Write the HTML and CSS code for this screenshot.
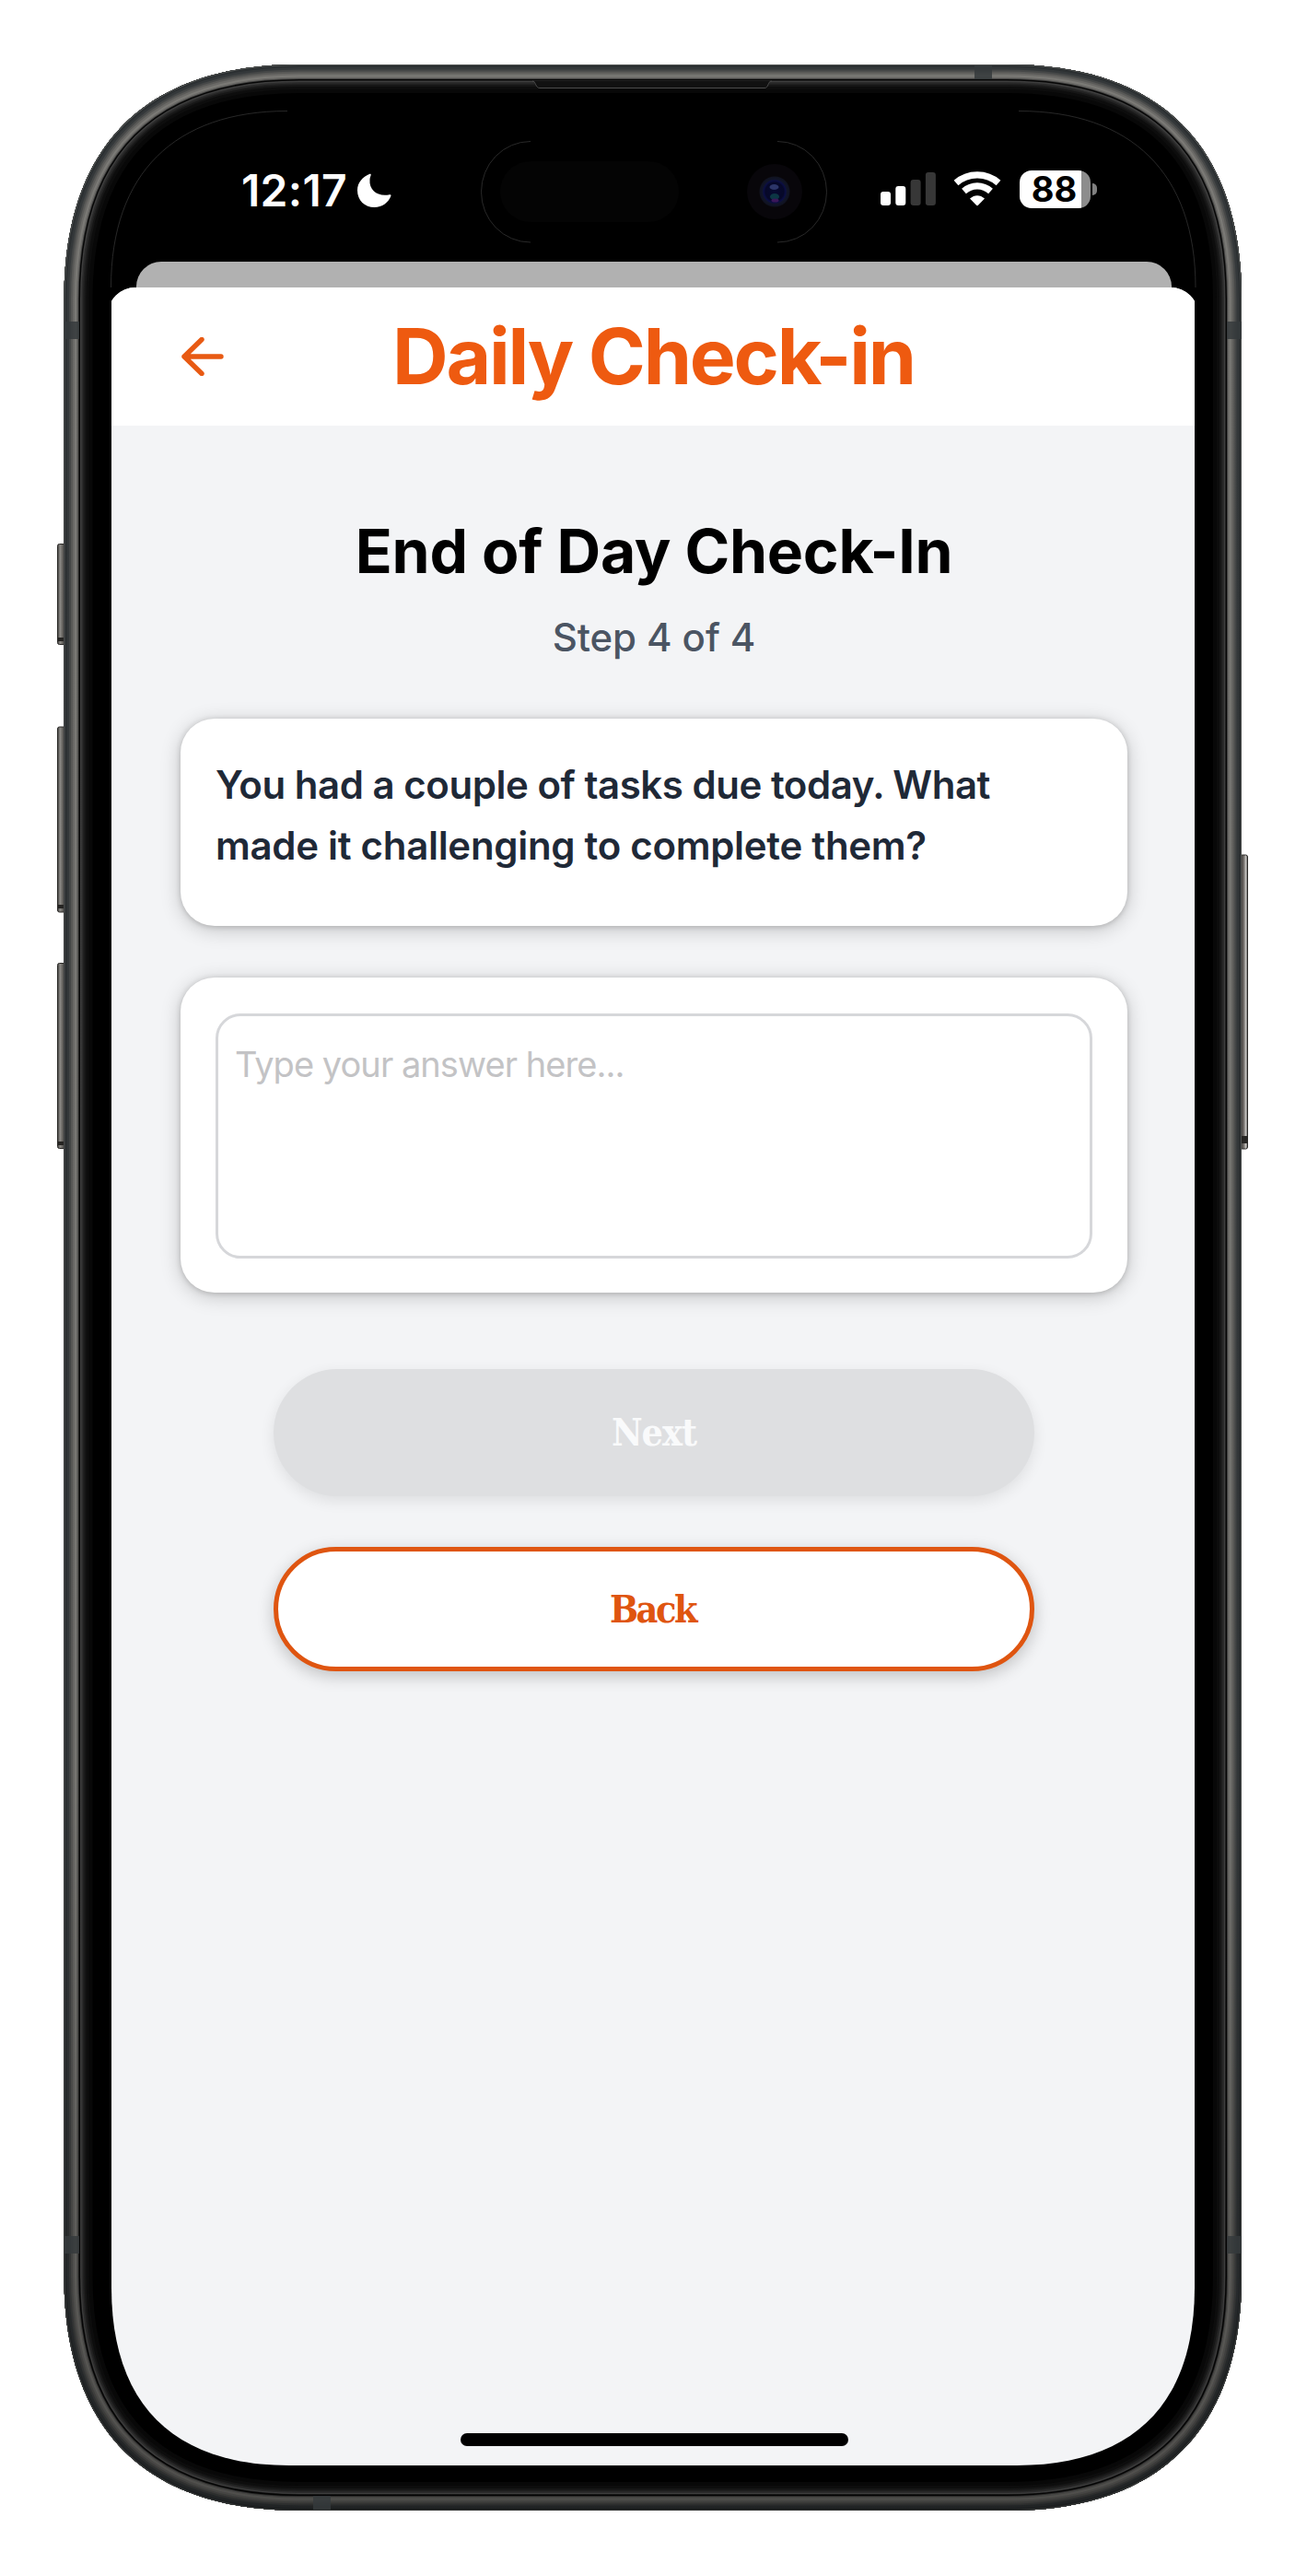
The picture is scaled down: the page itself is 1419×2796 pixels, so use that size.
FILE: index.html
```html
<!DOCTYPE html>
<html lang="en">
<head>
<meta charset="utf-8">
<title>Daily Check-in</title>
<link rel="stylesheet" href="styles.css">
</head>
<body>
<div class="phone">
  <svg class="bezel" viewBox="0 0 1419 2796" aria-hidden="true">
    <defs>
      <path id="body" d="M69.5 325C69.5 158 158 70 325 70H1093C1260 70 1348 158 1348 325V2470C1348 2637 1260 2725 1093 2725H325C158 2725 69.5 2637 69.5 2470Z"/>
      <clipPath id="bodyClip"><use href="#body"/></clipPath>
      <linearGradient id="shade" x1="0" y1="0" x2="0" y2="1">
        <stop offset="0" stop-color="#000" stop-opacity="0"/>
        <stop offset=".7" stop-color="#000" stop-opacity=".04"/>
        <stop offset="1" stop-color="#000" stop-opacity=".36"/>
      </linearGradient>
      <linearGradient id="btnL" x1="0" x2="1" y1="0" y2="0">
        <stop offset="0" stop-color="#3a3937"/><stop offset=".3" stop-color="#8d8b87"/>
        <stop offset=".55" stop-color="#6b6965"/><stop offset="1" stop-color="#2c2b29"/>
      </linearGradient>
      <linearGradient id="btnR" x1="1" x2="0" y1="0" y2="0">
        <stop offset="0" stop-color="#555"/><stop offset=".25" stop-color="#c0bebb"/>
        <stop offset=".5" stop-color="#75716d"/><stop offset="1" stop-color="#2f2c2a"/>
      </linearGradient>
      <radialGradient id="lens" cx=".5" cy=".5" r=".5">
        <stop offset="0" stop-color="#070a30"/><stop offset=".6" stop-color="#060828"/>
        <stop offset=".72" stop-color="#0b0e44"/><stop offset=".82" stop-color="#111528"/><stop offset="1" stop-color="#10121f"/>
      </radialGradient>
    </defs>
    <g fill="url(#btnL)" stroke="#2a2927">
      <rect x="62.500" y="581.500" width="9" height="0"/>
      <rect x="62.500" y="590.500" width="9" height="109" rx="2"/>
      <rect x="62.500" y="789" width="9" height="201" rx="2"/>
      <rect x="62.500" y="1045.500" width="9" height="201" rx="2"/>
    </g>
    <g fill="#262523">
      <rect x="63" y="692" width="7" height="4"/>
      <rect x="63" y="982" width="7" height="4"/>
      <rect x="63" y="1239" width="7" height="4"/>
    </g>
    <rect x="1346.500" y="928" width="8" height="319" rx="2" fill="url(#btnR)" stroke="#2a2927"/>
    <rect x="1347" y="1233" width="7" height="8" fill="#262523"/>
    <use href="#body" fill="#000"/>
    <g clip-path="url(#bodyClip)" fill="none">
      <use href="#body" stroke="#080808" stroke-width="62"/>
      <use href="#body" stroke="#0d0d0d" stroke-width="54"/>
      <use href="#body" stroke="#161616" stroke-width="48"/>
      <use href="#body" stroke="#212121" stroke-width="44"/>
      <use href="#body" stroke="#2c2c2c" stroke-width="41"/>
      <use href="#body" stroke="#3d3d3d" stroke-width="38"/>
      <use href="#body" stroke="#060606" stroke-width="35"/>
      <use href="#body" stroke="#444443" stroke-width="32"/>
      <use href="#body" stroke="#6b6a67" stroke-width="30"/>
      <use href="#body" stroke="#7b7a76" stroke-width="27"/>
      <use href="#body" stroke="#6b6a67" stroke-width="23"/>
      <use href="#body" stroke="#595957" stroke-width="19"/>
      <use href="#body" stroke="#454747" stroke-width="15"/>
      <use href="#body" stroke="#34383a" stroke-width="11"/>
      <use href="#body" stroke="#2b2f31" stroke-width="6"/>
      <use href="#body" stroke="#505352" stroke-width="2"/>
      <use href="#body" stroke="url(#shade)" stroke-width="36"/>
    </g>
    <g fill="#35393c" opacity=".85">
      <rect x="70" y="349" width="16" height="19"/><rect x="1332" y="349" width="16" height="19"/>
      <rect x="70" y="2427" width="16" height="19"/><rect x="1332" y="2427" width="16" height="19"/>
      <rect x="1058" y="71" width="19" height="15"/><rect x="340" y="2709" width="19" height="15"/>
    </g>
    <path d="M580 88Q582 94 584 95.500H831Q833 94 836 88Z" fill="#111"/>
    <path d="M578 88C582 88 581 95.500 586 95.500H830C835 95.500 833 88 838 88" fill="none" stroke="#4a4a4a"/>
    <path d="M120.500 312C120.500 188 190 120.500 312 120.500M1106 120.500C1228 120.500 1298 188 1298 312" fill="none" stroke="#3a3a3a" stroke-width=".7"/>
  </svg>

  <div class="screen">
    <header class="status">
      <div class="clock">
        <span class="time">12:17</span>
        <svg class="moon" viewBox="0 0 38 38"><path d="M14 1C7 4 1 10 1 18.500C1 29.500 9 37 19.500 37C28 37 35 31.500 37.500 24.500C37.500 23.300 37 23 36 23.200C24 26 13.500 19 14.500 7C14.600 5 15.200 3.500 15.700 2C15.900 1 15.200 .5 14 1Z" fill="#fff"/></svg>
      </div>
      <svg class="island" viewBox="0 0 376 111">
        <path d="M54 .5A53.500 54.750 0 0 0 54 110M322 .5A53.500 54.750 0 0 1 322 110" fill="none" stroke="#343434" stroke-width=".8"/>
        <rect x="21" y="22" width="194" height="66" rx="33" fill="#040404"/>
        <circle cx="319" cy="55" r="30" fill="#08060a"/>
        <circle cx="319" cy="55" r="16.500" fill="url(#lens)"/>
        <ellipse cx="318.500" cy="50" rx="5" ry="3" fill="#2c3568"/>
        <ellipse cx="319" cy="60.500" rx="5" ry="3.500" fill="#0c3644"/>
        <ellipse cx="319.500" cy="64.500" rx="4" ry="2" fill="#3b175a"/>
      </svg>
      <div class="indicators">
        <svg class="signal" viewBox="0 0 60 38"><g fill="#fff"><rect x="0" y="22" width="11" height="15" rx="3"/><rect x="16.300" y="16" width="11" height="21" rx="3"/></g><g fill="#373737"><rect x="32.600" y="9" width="11" height="28" rx="3"/><rect x="48.900" y="1" width="11" height="36" rx="3"/></g></svg>
        <svg class="wifi" viewBox="0 0 52 38"><g fill="none" stroke="#fff" stroke-width="7.200"><path d="M3 12.500C16 1 36 1 49 12.500"/><path d="M11.500 21.500C20 14 32 14 40.500 21.500"/></g><path d="M18 29.500C23 25 29 25 34 29.500L27.200 36.600Q26 37.800 24.800 36.600Z" fill="#fff"/></svg>
        <div class="battery"><span class="level">88</span><i class="cap"></i></div>
      </div>
    </header>

    <div class="behind"></div>
    <main class="sheet">
      <div class="bar">
        <svg class="arrow" viewBox="0 0 46 42"><path d="M22 2.500L3 21L22 39.500M3 21H43" fill="none" stroke="#e85a13" stroke-width="5.400" stroke-linecap="round" stroke-linejoin="round"/></svg>
        <h1 class="title">Daily Check-in</h1>
      </div>
      <section class="content">
        <h2 class="heading">End of Day Check-In</h2>
        <p class="step">Step 4 of 4</p>
        <div class="card question">
          <div class="line first">You had a couple of tasks due today. What</div>
          <div class="line second">made it challenging to complete them?</div>
        </div>
        <div class="card answer"><div class="field"><span class="placeholder">Type your answer here...</span></div></div>
        <div class="button next"><span>Next</span></div>
        <div class="button back"><span>Back</span></div>
      </section>
      <div class="home"></div>
    </main>
  </div>
</div>
</body>
</html>
```
FILE: styles.css
```css
* { box-sizing: border-box; }
body { margin: 0; background: #fff; font-family: Inter, "Liberation Sans", sans-serif; }
h1, h2, p { margin: 0; font-weight: inherit; }
svg { display: block; flex: none; }

.phone { position: relative; width: 1419px; height: 2796px; padding: 120px 122px 120px 121px; overflow: hidden; }
.bezel { position: absolute; inset: 0; width: 1419px; height: 2796px; }
.screen {
  position: relative; height: 2556px; display: flex; flex-direction: column;
  clip-path: path("M0 193C0 67 67 0 193 0H983C1109 0 1176 67 1176 193V2363C1176 2489 1109 2556 983 2556H193C67 2556 0 2489 0 2363Z");
}

.status { height: 164px; display: flex; align-items: flex-start; color: #fff; }
.clock { width: 401px; padding: 67px 0 0 141px; display: flex; gap: 11px; }
.time { width: 114px; font-size: 48px; line-height: 40px; font-weight: 600; letter-spacing: .3px; white-space: nowrap; }
.moon { width: 38px; height: 38px; margin-top: 1px; }
.island { width: 376px; height: 111px; margin-top: 33px; }
.indicators { display: flex; align-items: flex-start; padding: 65px 0 0 58px; }
.signal { width: 60px; height: 38px; margin: 1px 19px 0 0; }
.wifi { width: 52px; height: 38px; margin: 1px 20px 0 0; }
.battery { display: flex; align-items: center; gap: 2px; }
.level {
  width: 77px; height: 41px; border-radius: 13px; padding-right: 2px;
  background: linear-gradient(90deg, #fff 67px, #8d8d8d 67px);
  color: #000; font-size: 38px; line-height: 41px; font-weight: 700; text-align: center;
}
.cap { width: 5px; height: 13px; border-radius: 0 5px 5px 0; background: #808080; }

.behind { height: 28px; margin: 0 25px 0 27px; border-radius: 27px 27px 0 0; background: #b1b1b1; }
.sheet { flex: 1; display: flex; flex-direction: column; margin: 0 -4px; padding: 0 4px; border-radius: 30px 30px 0 0; background: #f3f4f6; overflow: hidden; }
.bar { height: 150px; margin: 0 -4px; padding: 0 4px; display: flex; align-items: center; background: #fff; }
.arrow { width: 46px; height: 42px; margin-left: 76px; }
.title { width: 562px; margin-left: 183px; font-size: 84px; line-height: 100px; font-weight: 700; letter-spacing: -2.25px; color: #ee5a10; white-space: nowrap; }

.content { flex: 1; display: flex; flex-direction: column; align-items: center; padding: 96px 0 0 2px; }
.heading { font-size: 66px; line-height: 80px; font-weight: 700; letter-spacing: -.3px; color: #000; white-space: nowrap; }
.step { margin-top: 29px; font-size: 42px; line-height: 50px; font-weight: 500; letter-spacing: -.1px; color: #4b5563; white-space: nowrap; }
.card { width: 1028px; border-radius: 37px; background: #fff; box-shadow: 0 4px 22px rgba(0,0,0,.2), 0 1px 6px rgba(0,0,0,.18); }
.question { height: 225px; margin-top: 63px; padding: 39px 38px; }
.line { font-size: 42px; line-height: 65.500px; font-weight: 600; color: #1f2937; white-space: nowrap; }
.first { letter-spacing: -.47px; }
.second { letter-spacing: -.3px; }
.answer { height: 342px; margin-top: 56px; padding: 39px 38px; }
.field { height: 266px; padding: 29px 18px; border: 3px solid #d6d7da; border-radius: 27px; }
.placeholder { font-size: 38px; line-height: 46px; letter-spacing: -.95px; color: #c3c3c5; white-space: nowrap; }
.button { width: 826px; display: flex; align-items: center; justify-content: center; border-radius: 70px; font-family: "DejaVu Serif Condensed", "DejaVu Serif", serif; font-stretch: condensed; font-weight: 700; font-size: 41px; letter-spacing: -1px; }
.next { height: 138px; margin-top: 83px; background: #dedfe1; color: #f9fafb; box-shadow: 0 5px 16px rgba(0,0,0,.09); }
.back { height: 135px; margin-top: 55px; padding-right: 3px; background: #fff; border: 5px solid #df5510; color: #df5510; letter-spacing: -2.500px; box-shadow: 0 5px 18px rgba(0,0,0,.22); }
.home { width: 421px; height: 14px; margin: 0 auto 21px; border-radius: 7px; background: #000; transform: translateX(1px); }
```
